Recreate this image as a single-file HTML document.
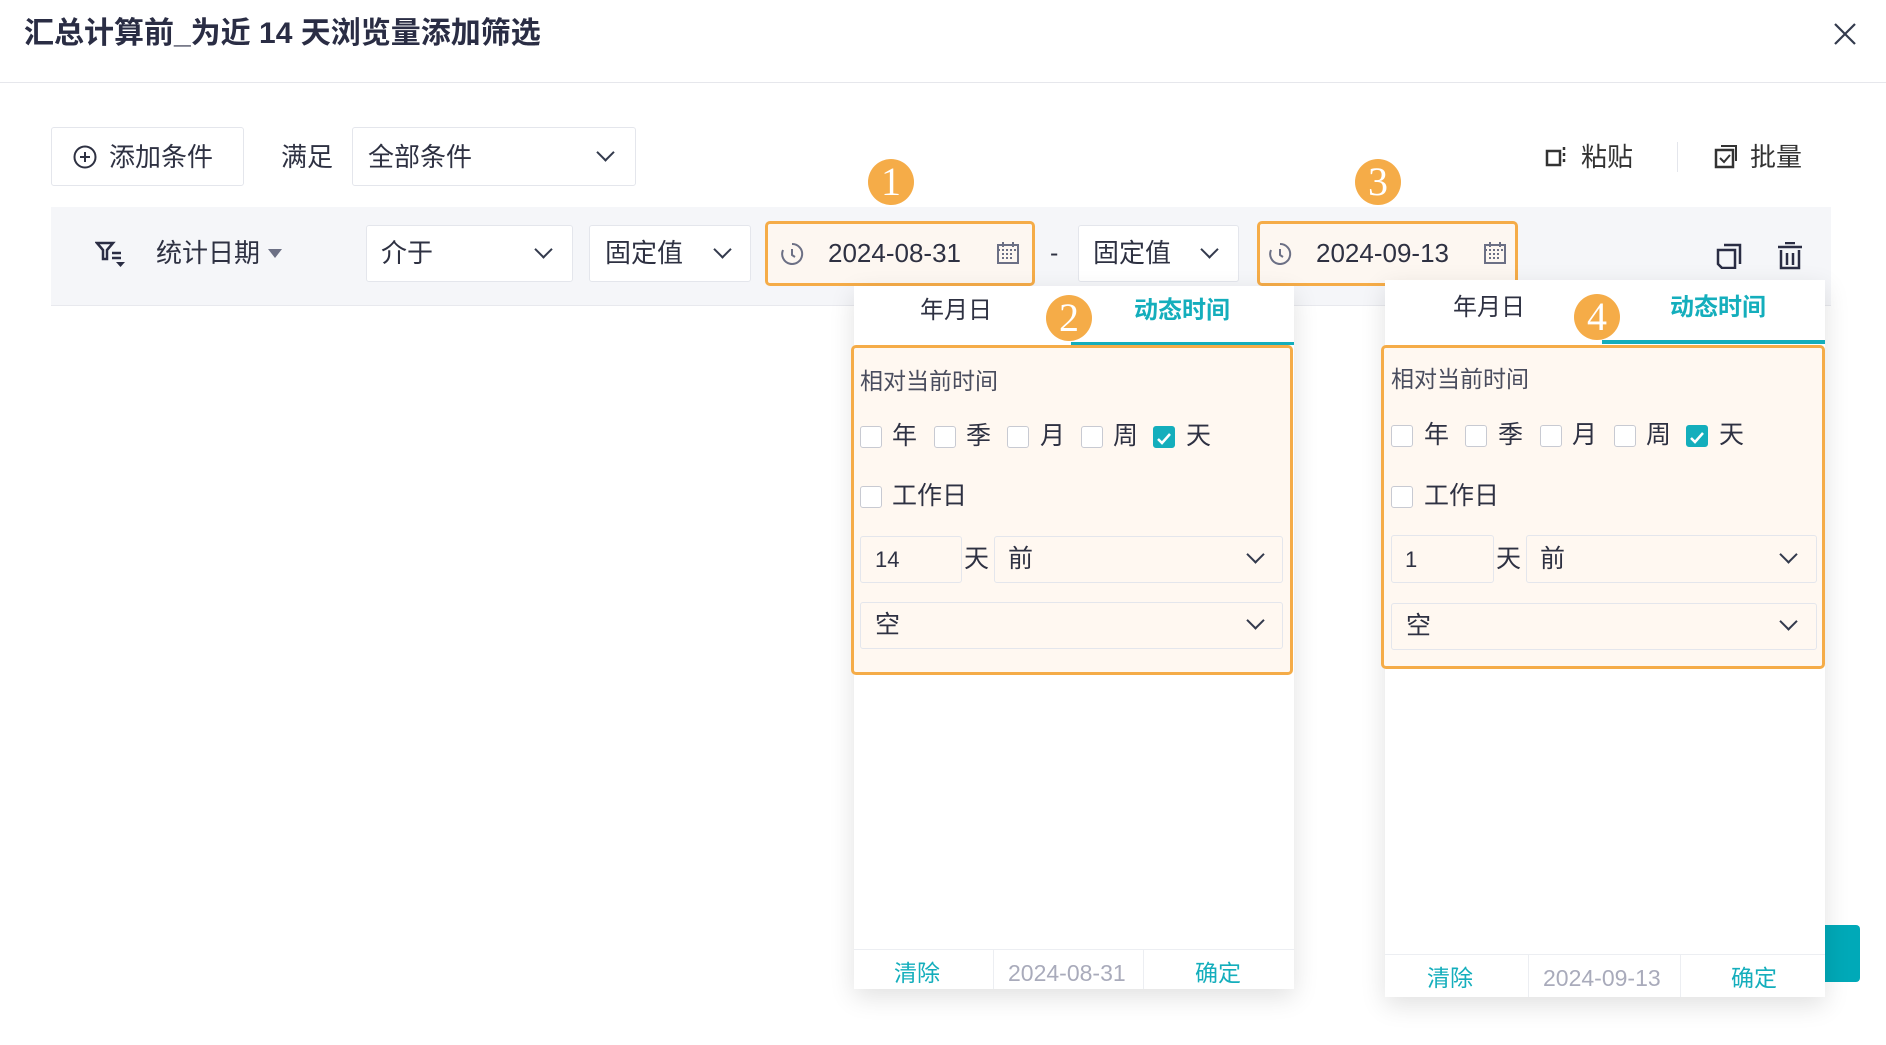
<!DOCTYPE html>
<html><head><meta charset="utf-8"><style>
*{box-sizing:border-box;margin:0;padding:0}
body{width:1886px;height:1045px;background:#fff;position:relative;overflow:hidden;font-family:"Liberation Sans","Noto Sans CJK SC",sans-serif;color:#2e3142;font-size:25px}
.a{position:absolute}
.box{position:absolute;border:1px solid #e4e6ec;background:#fff;border-radius:3px}
.t{position:absolute;white-space:nowrap;line-height:1}
.chev{position:absolute;width:13px;height:13px;border-right:2px solid #333a4d;border-bottom:2px solid #333a4d;transform:rotate(45deg)}
.badge{position:absolute;width:46px;height:46px;border-radius:50%;background:#f5ac48;color:#fff;font-family:"Liberation Serif",serif;font-size:40px;text-align:center;line-height:46px}
.panel{position:absolute;background:#fff;box-shadow:0 8px 24px rgba(0,0,0,.12)}
.ob{position:absolute;border:3px solid #f5ac48;border-radius:5px;background:#fff8f1}
.cb{position:absolute;width:22px;height:22px;border:1px solid #c8cad2;border-radius:3px;background:#fff}
.cb.on{background:#14aebc;border-color:#14aebc}
.teal{color:#14aebc}
.d{font-size:26px}
</style></head><body>
<div class="t" style="left:24px;top:19px;font-size:30px;font-weight:bold;color:#2a2d44">汇总计算前_为近 14 天浏览量添加筛选</div>
<svg class="a" style="left:1833px;top:22px" width="24" height="24"><path d="M2 2L22 22M22 2L2 22" stroke="#333a4d" stroke-width="2.2"/></svg>
<div class="a" style="left:0;top:82px;width:1886px;height:1px;background:#e6e7ec"></div>

<div class="box" style="left:51px;top:127px;width:193px;height:59px"></div>
<svg class="a" style="left:73px;top:145px" width="24" height="24"><circle cx="12" cy="12" r="10.5" fill="none" stroke="#2e3142" stroke-width="2"/><path d="M12 7v10M7 12h10" stroke="#2e3142" stroke-width="2"/></svg>
<div class="t" style="left:109px;top:144px;font-size:26px">添加条件</div>
<div class="t" style="left:281px;top:144px;font-size:26px">满足</div>
<div class="box" style="left:352px;top:127px;width:284px;height:59px"></div>
<div class="t" style="left:368px;top:144px;font-size:26px">全部条件</div>
<div class="chev" style="left:599px;top:146px"></div>

<svg class="a" style="left:1545px;top:145px" width="22" height="24"><rect x="2" y="6" width="13" height="14" fill="none" stroke="#333" stroke-width="2.5"/><path d="M19 2v3M19 8v3M19 14v3" stroke="#333" stroke-width="2.5"/></svg>
<div class="t" style="left:1581px;top:144px;color:#333;font-size:26px">粘贴</div>
<div class="a" style="left:1677px;top:142px;width:1px;height:30px;background:#e4e6ec"></div>
<svg class="a" style="left:1714px;top:144px" width="26" height="26"><rect x="2" y="6" width="17" height="17" fill="none" stroke="#333" stroke-width="2.5"/><path d="M7 2h15v15" fill="none" stroke="#333" stroke-width="2"/><path d="M6 14l4 4 6-7" fill="none" stroke="#333" stroke-width="2"/></svg>
<div class="t" style="left:1750px;top:144px;color:#333;font-size:26px">批量</div>

<div class="a" style="left:51px;top:207px;width:1780px;height:99px;background:#f5f6f9;border-bottom:1px solid #e8e9ee"></div>
<svg class="a" style="left:95px;top:240px" width="34" height="28"><path d="M2 3h16l-6 7v9h-4v-9z" fill="none" stroke="#2a2d44" stroke-width="2.5"/><path d="M17 13h9M17 18h9" stroke="#2a2d44" stroke-width="2.5"/><path d="M21 22h9l-4.5 5z" fill="#2a2d44"/></svg>
<div class="t" style="left:156px;top:240px;font-size:26px">统计日期</div>
<svg class="a" style="left:268px;top:249px" width="14" height="10"><path d="M0 0h14L7 9z" fill="#6c7085"/></svg>
<div class="box" style="left:366px;top:225px;width:207px;height:57px"></div>
<div class="t" style="left:381px;top:240px;font-size:26px">介于</div>
<div class="chev" style="left:537px;top:243px"></div>
<div class="box" style="left:589px;top:225px;width:162px;height:57px"></div>
<div class="t" style="left:605px;top:240px;font-size:26px">固定值</div>
<div class="chev" style="left:716px;top:243px"></div>

<div class="ob" style="left:765px;top:221px;width:270px;height:65px;background:#fdf7f1"></div>
<svg class="a" style="left:780px;top:242px" width="24" height="24"><path d="M12 2a10 10 0 1 1-9 6" fill="none" stroke="#6c7085" stroke-width="2"/><path d="M12 7v6l3 2" fill="none" stroke="#6c7085" stroke-width="2"/></svg>
<div class="t d" style="left:828px;top:240px">2024-08-31</div>
<svg class="a" style="left:997px;top:242px" width="22" height="22"><rect x="1" y="3" width="20" height="18" fill="none" stroke="#6c7085" stroke-width="2"/><path d="M1 8h20M6 0v5M16 0v5M5 12h12M5 16h12" stroke="#6c7085" stroke-width="2" stroke-dasharray="2 2"/></svg>
<div class="t" style="left:1050px;top:241px">-</div>
<div class="box" style="left:1078px;top:225px;width:161px;height:57px"></div>
<div class="t" style="left:1093px;top:240px;font-size:26px">固定值</div>
<div class="chev" style="left:1203px;top:243px"></div>
<div class="ob" style="left:1257px;top:221px;width:261px;height:65px;background:#fdf7f1"></div>
<svg class="a" style="left:1268px;top:242px" width="24" height="24"><path d="M12 2a10 10 0 1 1-9 6" fill="none" stroke="#6c7085" stroke-width="2"/><path d="M12 7v6l3 2" fill="none" stroke="#6c7085" stroke-width="2"/></svg>
<div class="t d" style="left:1316px;top:240px">2024-09-13</div>
<svg class="a" style="left:1484px;top:242px" width="22" height="22"><rect x="1" y="3" width="20" height="18" fill="none" stroke="#6c7085" stroke-width="2"/><path d="M1 8h20M6 0v5M16 0v5M5 12h12M5 16h12" stroke="#6c7085" stroke-width="2" stroke-dasharray="2 2"/></svg>
<svg class="a" style="left:1716px;top:243px" width="26" height="26"><path d="M8 2h16v19" fill="none" stroke="#2a2d44" stroke-width="2.5"/><path d="M2 7h17v18H6L2 21z" fill="none" stroke="#2a2d44" stroke-width="2.5"/></svg>
<svg class="a" style="left:1777px;top:242px" width="26" height="28"><path d="M1 5h24M8 1h10" stroke="#2a2d44" stroke-width="2.5"/><path d="M4 8v18h18V8M10 11v12M16 11v12" fill="none" stroke="#2a2d44" stroke-width="2.5"/></svg>

<div class="badge" style="left:868px;top:159px">1</div>
<div class="badge" style="left:1355px;top:159px">3</div>

<!-- panel 1 -->
<div class="panel" style="left:854px;top:286px;width:440px;height:703px"></div>
<div class="t" style="left:920px;top:299px;font-size:24px">年月日</div>
<div class="t teal" style="left:1134px;top:299px;font-size:24px;font-weight:bold">动态时间</div>
<div class="a" style="left:1071px;top:342px;width:223px;height:3px;background:#14aebc"></div>
<div class="badge" style="left:1046px;top:295px">2</div>
<div class="ob" style="left:851px;top:345px;width:442px;height:330px"></div>
<div class="t" style="left:860px;top:370px;font-size:23px;color:#4a4d5e">相对当前时间</div>
<div class="cb" style="left:860px;top:426px"></div><div class="t" style="left:892px;top:424px">年</div>
<div class="cb" style="left:934px;top:426px"></div><div class="t" style="left:966px;top:424px">季</div>
<div class="cb" style="left:1007px;top:426px"></div><div class="t" style="left:1040px;top:424px">月</div>
<div class="cb" style="left:1081px;top:426px"></div><div class="t" style="left:1113px;top:424px">周</div>
<div class="cb on" style="left:1153px;top:426px"><svg width="20" height="20"><path d="M4 10l4 4 8-9" fill="none" stroke="#fff" stroke-width="2.5"/></svg></div><div class="t" style="left:1186px;top:424px">天</div>
<div class="cb" style="left:860px;top:486px"></div><div class="t" style="left:892px;top:484px">工作日</div>
<div class="box" style="left:860px;top:536px;width:102px;height:47px;background:#fff8f1"></div>
<div class="t" style="left:875px;top:549px;font-size:22px">14</div>
<div class="t" style="left:964px;top:547px">天</div>
<div class="box" style="left:994px;top:536px;width:289px;height:47px;background:#fff8f1"></div>
<div class="t" style="left:1008px;top:547px">前</div>
<div class="chev" style="left:1249px;top:548px"></div>
<div class="box" style="left:860px;top:602px;width:423px;height:47px;background:#fff8f1"></div>
<div class="t" style="left:875px;top:613px">空</div>
<div class="chev" style="left:1249px;top:614px"></div>
<div class="a" style="left:854px;top:949px;width:440px;height:1px;background:#eceef2"></div>
<div class="a" style="left:993px;top:949px;width:1px;height:40px;background:#eceef2"></div>
<div class="a" style="left:1143px;top:949px;width:1px;height:40px;background:#eceef2"></div>
<div class="t teal" style="left:894px;top:962px;font-size:23px">清除</div>
<div class="t" style="left:1008px;top:962px;font-size:23px;color:#a9abbb">2024-08-31</div>
<div class="t teal" style="left:1195px;top:962px;font-size:23px">确定</div>

<!-- teal button -->
<div class="a" style="left:1820px;top:925px;width:40px;height:57px;background:#00a9b8;border-radius:4px"></div>

<!-- panel 2 -->
<div class="panel" style="left:1385px;top:280px;width:440px;height:717px"></div>
<div class="t" style="left:1453px;top:296px;font-size:24px">年月日</div>
<div class="t teal" style="left:1670px;top:296px;font-size:24px;font-weight:bold">动态时间</div>
<div class="a" style="left:1602px;top:340px;width:223px;height:4px;background:#14aebc"></div>
<div class="badge" style="left:1574px;top:294px">4</div>
<div class="ob" style="left:1381px;top:345px;width:444px;height:324px"></div>
<div class="t" style="left:1391px;top:368px;font-size:23px;color:#4a4d5e">相对当前时间</div>
<div class="cb" style="left:1391px;top:425px"></div><div class="t" style="left:1424px;top:423px">年</div>
<div class="cb" style="left:1465px;top:425px"></div><div class="t" style="left:1498px;top:423px">季</div>
<div class="cb" style="left:1540px;top:425px"></div><div class="t" style="left:1572px;top:423px">月</div>
<div class="cb" style="left:1614px;top:425px"></div><div class="t" style="left:1646px;top:423px">周</div>
<div class="cb on" style="left:1686px;top:425px"><svg width="20" height="20"><path d="M4 10l4 4 8-9" fill="none" stroke="#fff" stroke-width="2.5"/></svg></div><div class="t" style="left:1719px;top:423px">天</div>
<div class="cb" style="left:1391px;top:486px"></div><div class="t" style="left:1424px;top:484px">工作日</div>
<div class="box" style="left:1391px;top:535px;width:103px;height:48px;background:#fff8f1"></div>
<div class="t" style="left:1405px;top:549px;font-size:22px">1</div>
<div class="t" style="left:1496px;top:547px">天</div>
<div class="box" style="left:1526px;top:535px;width:291px;height:48px;background:#fff8f1"></div>
<div class="t" style="left:1540px;top:547px">前</div>
<div class="chev" style="left:1782px;top:548px"></div>
<div class="box" style="left:1391px;top:603px;width:426px;height:47px;background:#fff8f1"></div>
<div class="t" style="left:1406px;top:614px">空</div>
<div class="chev" style="left:1782px;top:615px"></div>
<div class="a" style="left:1385px;top:954px;width:440px;height:1px;background:#eceef2"></div>
<div class="a" style="left:1528px;top:954px;width:1px;height:43px;background:#eceef2"></div>
<div class="a" style="left:1680px;top:954px;width:1px;height:43px;background:#eceef2"></div>
<div class="t teal" style="left:1427px;top:967px;font-size:23px">清除</div>
<div class="t" style="left:1543px;top:967px;font-size:23px;color:#a9abbb">2024-09-13</div>
<div class="t teal" style="left:1731px;top:967px;font-size:23px">确定</div>
</body></html>
